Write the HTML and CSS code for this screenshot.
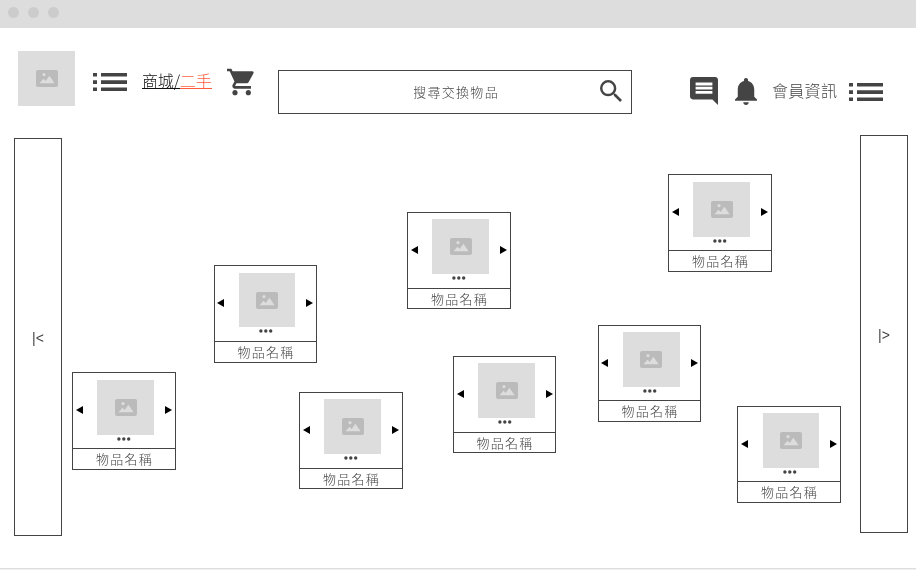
FILE: index.html
```
<!DOCTYPE html>
<html lang="zh-Hant">
<head>
<meta charset="utf-8">
<title>二手交換</title>
<link rel="stylesheet" href="styles.css">
<script src="cards.js" defer></script>
</head>
<body>
<svg class="defs" aria-hidden="true">
  <symbol id="picture" viewBox="0 0 22 17"><path fill="#bbb" d="M2 0H20Q22 0 22 2V15Q22 17 20 17H2Q0 17 0 15V2Q0 0 2 0Z"/><path fill="#ddd" d="M3.5 13.2 7.5 8.8 9.7 11 13.4 5.8 18.6 13.2Z"/><circle cx="8" cy="4.6" r="1.6" fill="#ddd"/></symbol>
  <symbol id="list" viewBox="0 0 34 19"><path d="M0 .4h4v3.5H0zM8 .4h26v3.5H8zM0 7.7h4v3.6H0zM8 7.7h26v3.6H8zM0 15h4v3.5H0zM8 15h26v3.5H8z"/></symbol>
</svg>
<div class="titlebar"><i></i><i></i><i></i></div>
<header class="header">
  <div class="logo"><svg class="picture"><use href="#picture"/></svg></div>
  <svg class="list list-left" viewBox="0 0 34 20"><use href="#list" width="34" height="19" y=".6"/></svg>
  <nav class="switch"><a class="mall">商城/</a><a class="used">二手</a></nav>
  <svg class="cart" viewBox="1 2 21 20"><path d="M7 18c-1.1 0-1.99.9-1.99 2S5.9 22 7 22s2-.9 2-2-.9-2-2-2zM1 2v2h2l3.6 7.59-1.35 2.45c-.16.28-.25.61-.25.96 0 1.1.9 2 2 2h12v-2H7.42c-.14 0-.25-.11-.25-.25l.03-.12.9-1.63h7.45c.75 0 1.41-.41 1.75-1.03l3.58-6.49A1 1 0 0 0 20.01 4H5.21l-.94-2H1zm16 16c-1.1 0-1.99.9-1.99 2s.89 2 1.99 2 2-.9 2-2-.9-2-2-2z"/></svg>
  <div class="search"><span>搜尋交換物品</span>
    <svg class="lens" viewBox="3 3 17.5 17.5"><path d="M15.5 14h-.79l-.28-.27A6.47 6.47 0 0 0 16 9.5 6.5 6.5 0 1 0 9.5 16c1.61 0 3.09-.59 4.23-1.57l.27.28v.79l5 4.99L20.49 19l-4.99-5zm-6 0C7.01 14 5 11.99 5 9.5S7.01 5 9.5 5 14 7.01 14 9.5 11.99 14 9.5 14z"/></svg>
  </div>
  <svg class="chat" viewBox="2 2 20 20"><path d="M21.99 4c0-1.1-.89-2-1.99-2H4c-1.1 0-2 .9-2 2v12c0 1.1.9 2 2 2h14l4 4-.01-18zM18 14H6v-2h12v2zm0-3H6V9h12v2zm0-3H6V6h12v2z"/></svg>
  <svg class="bell" viewBox="4 2.5 16 19.5" preserveAspectRatio="none"><path d="M12 22c1.1 0 2-.9 2-2h-4c0 1.1.89 2 2 2zm6-6v-5c0-3.07-1.64-5.64-4.5-6.32V4c0-.83-.67-1.5-1.5-1.5s-1.5.67-1.5 1.5v.68C7.63 5.36 6 7.92 6 11v5l-2 2v1h16v-1l-2-2z"/></svg>
  <span class="member">會員資訊</span>
  <svg class="list list-right" viewBox="0 0 34 20"><use href="#list" width="34" height="19" y=".6"/></svg>
</header>
<main class="board">
  <button class="side side-left"><span>|&lt;</span></button>
  <div class="canvas" id="canvas"></div>
  <button class="side side-right"><span>|&gt;</span></button>
</main>
</body>
</html>
```
FILE: styles.css
```
* { box-sizing: border-box; }
body {
  margin: 0;
  height: 570px;
  overflow: hidden;
  background: #fff;
  color: #444;
  font-family: "Noto Sans CJK TC", sans-serif;
  font-weight: 300;
}
svg { display: block; fill: #444; flex: none; }
.defs { position: absolute; width: 0; height: 0; }
.titlebar { display: flex; gap: 9px; height: 28px; padding: 7px 8px; background: #ddd; }
.titlebar i { width: 11px; height: 11px; border-radius: 50%; background: #ccc; }
.header { display: flex; align-items: flex-start; height: 107px; padding-left: 18px; will-change: transform; }
.logo { display: grid; place-items: center; width: 57px; height: 55px; margin-top: 23px; background: #ddd; flex: none; }
.picture { width: 22px; height: 17px; }
.list { width: 34px; height: 20px; }
.list-left { margin: 44px 0 0 18px; }
.switch { display: flex; width: 70px; margin: 43px 0 0 15px; font-size: 16px; letter-spacing: -.15px; white-space: nowrap; flex: none; }
.switch a { height: 18px; line-height: 18px; }
.mall { color: #111; border-bottom: 1px solid #111; }
.used { color: #ff5b3d; border-bottom: 1px solid #ff5b3d; }
.cart { width: 28px; height: 28px; margin: 40px 0 0 14.6px; }
.search {
  display: flex; align-items: center; justify-content: flex-end;
  width: 354px; height: 44px; margin: 42px 0 0 23.4px; padding-right: 9px;
  border: 1px solid #444; flex: none;
  font-size: 13px; letter-spacing: 1.3px;
}
.search span { margin-bottom: 1px; }
.lens { width: 22px; height: 22px; margin: 0 0 2px 101px; }
.chat { width: 28px; height: 28px; margin: 49px 0 0 58px; }
.bell { width: 22px; height: 27px; margin: 50px 0 0 17px; }
.member { width: 66px; margin: 50px 0 0 15px; font-size: 16px; line-height: 24px; letter-spacing: .3px; white-space: nowrap; flex: none; }
.list-right { margin: 54px 0 0 11px; }
.board { display: flex; height: 435px; padding: 0 8px 0 14px; background: linear-gradient(#ddd, #ddd) 0 433px / 100% 1px no-repeat, linear-gradient(#f0f0f0, #f0f0f0) 0 434px / 100% 1px no-repeat; }
.side {
  width: 48px; height: 398px; padding: 2px 0 0;
  border: 1px solid #444; background: #fff; color: #444; flex: none;
  font: 14px/20px "Liberation Sans", sans-serif;
}
.side span { display: block; will-change: transform; }
.side-left { margin-top: 3px; }
.canvas { position: relative; flex: 1; will-change: transform; }
.card { position: absolute; display: flex; flex-direction: column; border: 1px solid #444; }
.stage { display: flex; align-items: flex-start; flex: 1; border-bottom: 1px solid #444; }
.prev, .next { width: 7px; height: 8px; margin-top: 33px; fill: #000; }
.slide { flex: none; }
.next { margin-left: auto; }
.photo { padding-top: 19px; background: #ddd; }
.dots { width: 14px; height: 4px; margin: 2px 0 0 20px; }
.name { font-size: 13px; line-height: 20px; letter-spacing: 1.3px; text-align: center; text-indent: 1px; white-space: nowrap; }
```
FILE: cards.js
```
// Free canvas positions and the inner measures of each card
const items = [
  { x: 72,  y: 372, w: 104, h: 98, arrow: [3, 3], photo: [24, 7, 57, 55], icon: 18, name: 20 },
  { x: 214, y: 265, w: 103, h: 98, arrow: [2, 3], photo: [24, 7, 56, 54], icon: 17, name: 20 },
  { x: 407, y: 212, w: 104, h: 97, arrow: [3, 3], photo: [24, 6, 57, 55], icon: 18, name: 19 },
  { x: 668, y: 174, w: 104, h: 98, arrow: [3, 3], photo: [24, 7, 57, 55], icon: 18, name: 20 },
  { x: 299, y: 392, w: 104, h: 97, arrow: [3, 3], photo: [24, 6, 57, 55], icon: 18, name: 19 },
  { x: 453, y: 356, w: 103, h: 97, arrow: [3, 2], photo: [24, 6, 57, 55], icon: 18, name: 19 },
  { x: 598, y: 325, w: 103, h: 97, arrow: [2, 2], photo: [24, 6, 57, 55], icon: 17, name: 20 },
  { x: 737, y: 406, w: 104, h: 97, arrow: [3, 3], photo: [25, 6, 56, 55], icon: 17, name: 20 }
];
const origin = { x: 62, y: 135 };
document.getElementById('canvas').innerHTML = items.map(({ x, y, w, h, arrow: [left, right], photo: [px, py, pw, ph], icon, name }) => `
  <article class="card" style="left:${x - origin.x}px;top:${y - origin.y}px;width:${w}px;height:${h}px">
    <div class="stage">
      <svg class="prev" style="margin-left:${left}px" viewBox="0 0 7 8"><path d="M7 0V8L0 4Z"/></svg>
      <div class="slide" style="margin:${py}px 0 0 ${px - left - 7}px">
        <div class="photo" style="width:${pw}px;height:${ph}px;padding-left:${icon}px"><svg class="picture"><use href="#picture"/></svg></div>
        <svg class="dots" viewBox="0 0 14 4"><circle cx="1.9" cy="2" r="1.7"/><circle cx="6.8" cy="2" r="1.7"/><circle cx="11.7" cy="2" r="1.7"/></svg>
      </div>
      <svg class="next" style="margin-right:${right}px" viewBox="0 0 7 8"><path d="M0 0V8L7 4Z"/></svg>
    </div>
    <div class="name" style="height:${name}px">物品名稱</div>
  </article>`).join('');
```
